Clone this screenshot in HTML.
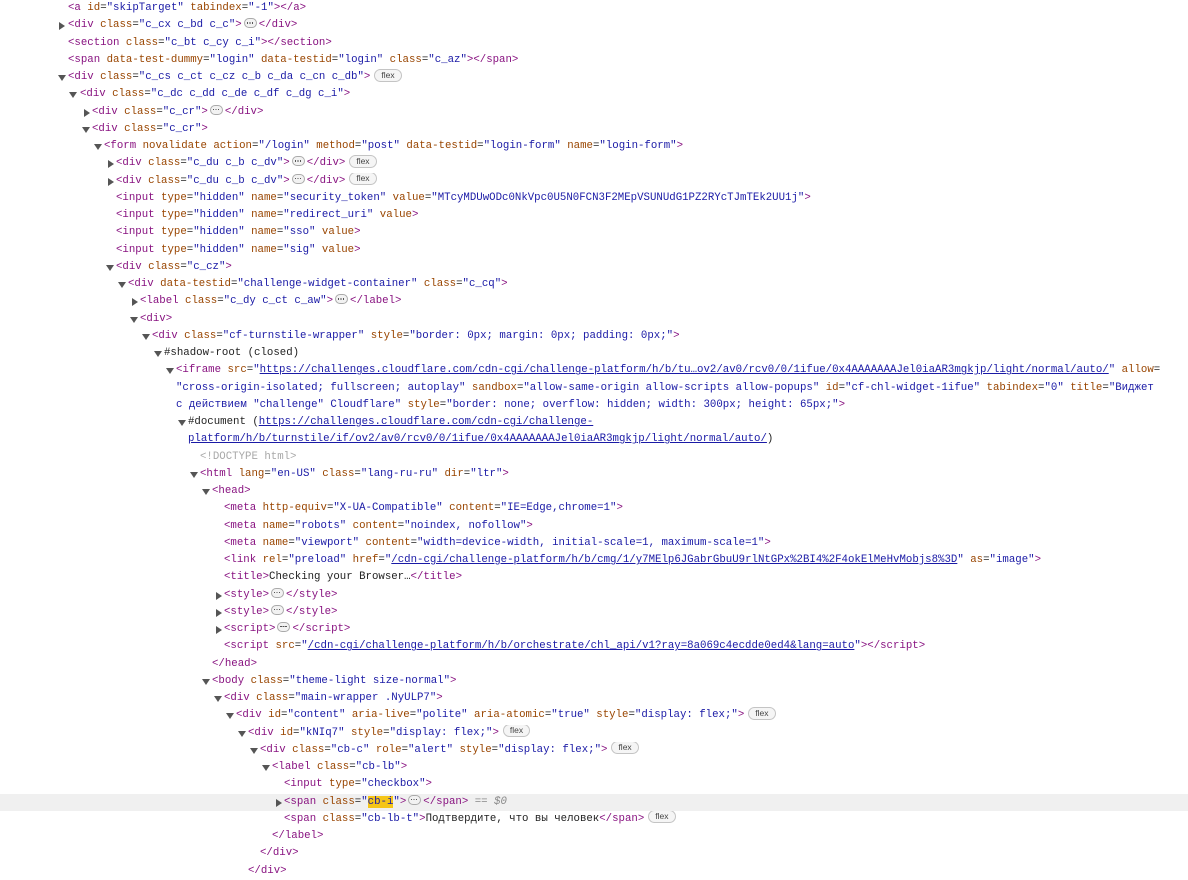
<!DOCTYPE html>
<html><head><meta charset="utf-8"><style>
body{margin:0;background:#fff;width:1188px;height:867px;overflow:hidden;font-family:"Liberation Mono","DejaVu Sans Mono",monospace;font-size:10.72px;color:#222}
.w{position:absolute;top:0px;left:0;width:1188px}
.r{position:relative;height:17.25px;line-height:17.25px;white-space:pre;overflow:hidden}
.hl{background:#f0f0f0}
.t{color:#881280}.a{color:#994500}.v{color:#1a1aa6}
.l{color:#1a1aa6;text-decoration:underline}
.g{color:#a8a8a8}.i{color:#888;font-style:italic}
.tri{position:absolute;width:0;height:0;top:6px}
.op{border-left:4px solid transparent;border-right:4px solid transparent;border-top:6px solid #555}
.cl{border-top:4px solid transparent;border-bottom:4px solid transparent;border-left:6px solid #555;top:5px}
.e{display:inline-block;width:11px;height:8px;border:1px solid #aaa;border-radius:5px;background:#f2f2f2;vertical-align:middle;position:relative;margin:0 2px;top:-1px}
.e:after{content:"";position:absolute;left:2px;top:3px;width:1.2px;height:1.2px;background:#555;box-shadow:2.5px 0 #555,5px 0 #555}
.f{display:inline-block;font-family:"Liberation Sans",sans-serif;font-size:8.5px;height:11px;line-height:11px;padding:0 6px;border:1px solid #c4c4c4;border-radius:7px;background:#f5f5f5;color:#444;vertical-align:middle;margin-left:4px;position:relative;top:-1px}
.y{background:#f5c518}
</style></head><body><div class="w">
<div class="r" style="padding-left:68px"><span class="t">&lt;a</span><span class="a"> id</span>=<span class="v">"skipTarget"</span><span class="a"> tabindex</span>=<span class="v">"-1"</span><span class="t">&gt;&lt;/a&gt;</span></div>
<div class="r" style="padding-left:68px"><span class="tri cl" style="left:59px"></span><span class="t">&lt;div</span><span class="a"> class</span>=<span class="v">"c_cx c_bd c_c"</span><span class="t">&gt;</span><span class="e"></span><span class="t">&lt;/div&gt;</span></div>
<div class="r" style="padding-left:68px"><span class="t">&lt;section</span><span class="a"> class</span>=<span class="v">"c_bt c_cy c_i"</span><span class="t">&gt;&lt;/section&gt;</span></div>
<div class="r" style="padding-left:68px"><span class="t">&lt;span</span><span class="a"> data-test-dummy</span>=<span class="v">"login"</span><span class="a"> data-testid</span>=<span class="v">"login"</span><span class="a"> class</span>=<span class="v">"c_az"</span><span class="t">&gt;&lt;/span&gt;</span></div>
<div class="r" style="padding-left:68px"><span class="tri op" style="left:58px"></span><span class="t">&lt;div</span><span class="a"> class</span>=<span class="v">"c_cs c_ct c_cz c_b c_da c_cn c_db"</span><span class="t">&gt;</span><span class="f">flex</span></div>
<div class="r" style="padding-left:80px"><span class="tri op" style="left:69px"></span><span class="t">&lt;div</span><span class="a"> class</span>=<span class="v">"c_dc c_dd c_de c_df c_dg c_i"</span><span class="t">&gt;</span></div>
<div class="r" style="padding-left:92px"><span class="tri cl" style="left:84px"></span><span class="t">&lt;div</span><span class="a"> class</span>=<span class="v">"c_cr"</span><span class="t">&gt;</span><span class="e"></span><span class="t">&lt;/div&gt;</span></div>
<div class="r" style="padding-left:92px"><span class="tri op" style="left:82px"></span><span class="t">&lt;div</span><span class="a"> class</span>=<span class="v">"c_cr"</span><span class="t">&gt;</span></div>
<div class="r" style="padding-left:104px"><span class="tri op" style="left:94px"></span><span class="t">&lt;form</span><span class="a"> novalidate action</span>=<span class="v">"/login"</span><span class="a"> method</span>=<span class="v">"post"</span><span class="a"> data-testid</span>=<span class="v">"login-form"</span><span class="a"> name</span>=<span class="v">"login-form"</span><span class="t">&gt;</span></div>
<div class="r" style="padding-left:116px"><span class="tri cl" style="left:108px"></span><span class="t">&lt;div</span><span class="a"> class</span>=<span class="v">"c_du c_b c_dv"</span><span class="t">&gt;</span><span class="e"></span><span class="t">&lt;/div&gt;</span><span class="f">flex</span></div>
<div class="r" style="padding-left:116px"><span class="tri cl" style="left:108px"></span><span class="t">&lt;div</span><span class="a"> class</span>=<span class="v">"c_du c_b c_dv"</span><span class="t">&gt;</span><span class="e"></span><span class="t">&lt;/div&gt;</span><span class="f">flex</span></div>
<div class="r" style="padding-left:116px"><span class="t">&lt;input</span><span class="a"> type</span>=<span class="v">"hidden"</span><span class="a"> name</span>=<span class="v">"security_token"</span><span class="a"> value</span>=<span class="v">"MTcyMDUwODc0NkVpc0U5N0FCN3F2MEpVSUNUdG1PZ2RYcTJmTEk2UU1j"</span><span class="t">&gt;</span></div>
<div class="r" style="padding-left:116px"><span class="t">&lt;input</span><span class="a"> type</span>=<span class="v">"hidden"</span><span class="a"> name</span>=<span class="v">"redirect_uri"</span><span class="a"> value</span><span class="t">&gt;</span></div>
<div class="r" style="padding-left:116px"><span class="t">&lt;input</span><span class="a"> type</span>=<span class="v">"hidden"</span><span class="a"> name</span>=<span class="v">"sso"</span><span class="a"> value</span><span class="t">&gt;</span></div>
<div class="r" style="padding-left:116px"><span class="t">&lt;input</span><span class="a"> type</span>=<span class="v">"hidden"</span><span class="a"> name</span>=<span class="v">"sig"</span><span class="a"> value</span><span class="t">&gt;</span></div>
<div class="r" style="padding-left:116px"><span class="tri op" style="left:106px"></span><span class="t">&lt;div</span><span class="a"> class</span>=<span class="v">"c_cz"</span><span class="t">&gt;</span></div>
<div class="r" style="padding-left:128px"><span class="tri op" style="left:118px"></span><span class="t">&lt;div</span><span class="a"> data-testid</span>=<span class="v">"challenge-widget-container"</span><span class="a"> class</span>=<span class="v">"c_cq"</span><span class="t">&gt;</span></div>
<div class="r" style="padding-left:140px"><span class="tri cl" style="left:132px"></span><span class="t">&lt;label</span><span class="a"> class</span>=<span class="v">"c_dy c_ct c_aw"</span><span class="t">&gt;</span><span class="e"></span><span class="t">&lt;/label&gt;</span></div>
<div class="r" style="padding-left:140px"><span class="tri op" style="left:130px"></span><span class="t">&lt;div&gt;</span></div>
<div class="r" style="padding-left:152px"><span class="tri op" style="left:142px"></span><span class="t">&lt;div</span><span class="a"> class</span>=<span class="v">"cf-turnstile-wrapper"</span><span class="a"> style</span>=<span class="v">"border: 0px; margin: 0px; padding: 0px;"</span><span class="t">&gt;</span></div>
<div class="r" style="padding-left:164px"><span class="tri op" style="left:154px"></span>#shadow-root (closed)</div>
<div class="r" style="padding-left:176px"><span class="tri op" style="left:166px"></span><span class="t">&lt;iframe</span><span class="a"> src</span>=<span class="v">"</span><span class="l">https://challenges.cloudflare.com/cdn-cgi/challenge-platform/h/b/tu…ov2/av0/rcv0/0/1ifue/0x4AAAAAAAJel0iaAR3mgkjp/light/normal/auto/</span><span class="v">"</span><span class="a"> allow</span>=</div>
<div class="r" style="padding-left:176px"><span class="v">"cross-origin-isolated; fullscreen; autoplay"</span><span class="a"> sandbox</span>=<span class="v">"allow-same-origin allow-scripts allow-popups"</span><span class="a"> id</span>=<span class="v">"cf-chl-widget-1ifue"</span><span class="a"> tabindex</span>=<span class="v">"0"</span><span class="a"> title</span>=<span class="v">"Виджет</span></div>
<div class="r" style="padding-left:176px"><span class="v">с действием "challenge" Cloudflare"</span><span class="a"> style</span>=<span class="v">"border: none; overflow: hidden; width: 300px; height: 65px;"</span><span class="t">&gt;</span></div>
<div class="r" style="padding-left:188px"><span class="tri op" style="left:178px"></span>#document (<span class="l">https://challenges.cloudflare.com/cdn-cgi/challenge-</span></div>
<div class="r" style="padding-left:188px"><span class="l">platform/h/b/turnstile/if/ov2/av0/rcv0/0/1ifue/0x4AAAAAAAJel0iaAR3mgkjp/light/normal/auto/</span>)</div>
<div class="r" style="padding-left:200px"><span class="g">&lt;!DOCTYPE html&gt;</span></div>
<div class="r" style="padding-left:200px"><span class="tri op" style="left:190px"></span><span class="t">&lt;html</span><span class="a"> lang</span>=<span class="v">"en-US"</span><span class="a"> class</span>=<span class="v">"lang-ru-ru"</span><span class="a"> dir</span>=<span class="v">"ltr"</span><span class="t">&gt;</span></div>
<div class="r" style="padding-left:212px"><span class="tri op" style="left:202px"></span><span class="t">&lt;head&gt;</span></div>
<div class="r" style="padding-left:224px"><span class="t">&lt;meta</span><span class="a"> http-equiv</span>=<span class="v">"X-UA-Compatible"</span><span class="a"> content</span>=<span class="v">"IE=Edge,chrome=1"</span><span class="t">&gt;</span></div>
<div class="r" style="padding-left:224px"><span class="t">&lt;meta</span><span class="a"> name</span>=<span class="v">"robots"</span><span class="a"> content</span>=<span class="v">"noindex, nofollow"</span><span class="t">&gt;</span></div>
<div class="r" style="padding-left:224px"><span class="t">&lt;meta</span><span class="a"> name</span>=<span class="v">"viewport"</span><span class="a"> content</span>=<span class="v">"width=device-width, initial-scale=1, maximum-scale=1"</span><span class="t">&gt;</span></div>
<div class="r" style="padding-left:224px"><span class="t">&lt;link</span><span class="a"> rel</span>=<span class="v">"preload"</span><span class="a"> href</span>=<span class="v">"</span><span class="l">/cdn-cgi/challenge-platform/h/b/cmg/1/y7MElp6JGabrGbuU9rlNtGPx%2BI4%2F4okElMeHvMobjs8%3D</span><span class="v">"</span><span class="a"> as</span>=<span class="v">"image"</span><span class="t">&gt;</span></div>
<div class="r" style="padding-left:224px"><span class="t">&lt;title&gt;</span>Checking your Browser…<span class="t">&lt;/title&gt;</span></div>
<div class="r" style="padding-left:224px"><span class="tri cl" style="left:216px"></span><span class="t">&lt;style&gt;</span><span class="e"></span><span class="t">&lt;/style&gt;</span></div>
<div class="r" style="padding-left:224px"><span class="tri cl" style="left:216px"></span><span class="t">&lt;style&gt;</span><span class="e"></span><span class="t">&lt;/style&gt;</span></div>
<div class="r" style="padding-left:224px"><span class="tri cl" style="left:216px"></span><span class="t">&lt;script&gt;</span><span class="e"></span><span class="t">&lt;/script&gt;</span></div>
<div class="r" style="padding-left:224px"><span class="t">&lt;script</span><span class="a"> src</span>=<span class="v">"</span><span class="l">/cdn-cgi/challenge-platform/h/b/orchestrate/chl_api/v1?ray=8a069c4ecdde0ed4&amp;lang=auto</span><span class="v">"</span><span class="t">&gt;&lt;/script&gt;</span></div>
<div class="r" style="padding-left:212px"><span class="t">&lt;/head&gt;</span></div>
<div class="r" style="padding-left:212px"><span class="tri op" style="left:202px"></span><span class="t">&lt;body</span><span class="a"> class</span>=<span class="v">"theme-light size-normal"</span><span class="t">&gt;</span></div>
<div class="r" style="padding-left:224px"><span class="tri op" style="left:214px"></span><span class="t">&lt;div</span><span class="a"> class</span>=<span class="v">"main-wrapper .NyULP7"</span><span class="t">&gt;</span></div>
<div class="r" style="padding-left:236px"><span class="tri op" style="left:226px"></span><span class="t">&lt;div</span><span class="a"> id</span>=<span class="v">"content"</span><span class="a"> aria-live</span>=<span class="v">"polite"</span><span class="a"> aria-atomic</span>=<span class="v">"true"</span><span class="a"> style</span>=<span class="v">"display: flex;"</span><span class="t">&gt;</span><span class="f">flex</span></div>
<div class="r" style="padding-left:248px"><span class="tri op" style="left:238px"></span><span class="t">&lt;div</span><span class="a"> id</span>=<span class="v">"kNIq7"</span><span class="a"> style</span>=<span class="v">"display: flex;"</span><span class="t">&gt;</span><span class="f">flex</span></div>
<div class="r" style="padding-left:260px"><span class="tri op" style="left:250px"></span><span class="t">&lt;div</span><span class="a"> class</span>=<span class="v">"cb-c"</span><span class="a"> role</span>=<span class="v">"alert"</span><span class="a"> style</span>=<span class="v">"display: flex;"</span><span class="t">&gt;</span><span class="f">flex</span></div>
<div class="r" style="padding-left:272px"><span class="tri op" style="left:262px"></span><span class="t">&lt;label</span><span class="a"> class</span>=<span class="v">"cb-lb"</span><span class="t">&gt;</span></div>
<div class="r" style="padding-left:284px"><span class="t">&lt;input</span><span class="a"> type</span>=<span class="v">"checkbox"</span><span class="t">&gt;</span></div>
<div class="r hl" style="padding-left:284px"><span class="tri cl" style="left:276px"></span><span class="t">&lt;span</span><span class="a"> class</span>=<span class="v">"<span class="y">cb-i</span>"</span><span class="t">&gt;</span><span class="e"></span><span class="t">&lt;/span&gt;</span> <span class="i">== $0</span></div>
<div class="r" style="padding-left:284px"><span class="t">&lt;span</span><span class="a"> class</span>=<span class="v">"cb-lb-t"</span><span class="t">&gt;</span>Подтвердите, что вы человек<span class="t">&lt;/span&gt;</span><span class="f">flex</span></div>
<div class="r" style="padding-left:272px"><span class="t">&lt;/label&gt;</span></div>
<div class="r" style="padding-left:260px"><span class="t">&lt;/div&gt;</span></div>
<div class="r" style="padding-left:248px"><span class="t">&lt;/div&gt;</span></div>
</div></body></html>
